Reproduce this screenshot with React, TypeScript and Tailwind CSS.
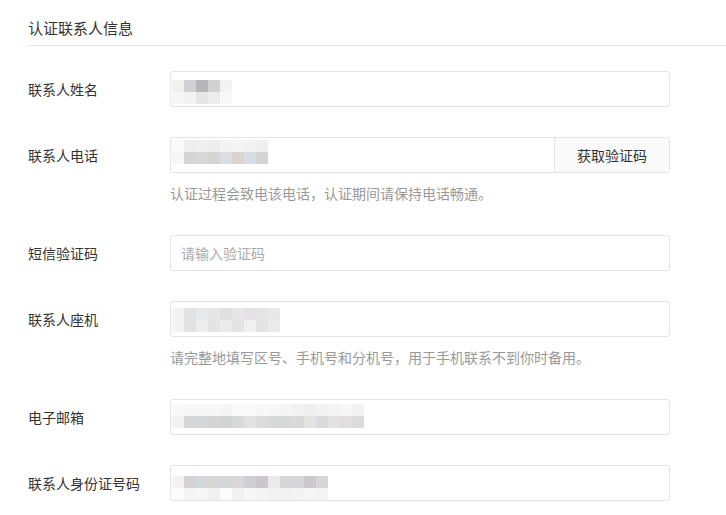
import React from "react";

// blurred values are drawn as mosaic blocks (12px cells)
type Mosaic = { top: number; rows: string[][] };

const nameMosaic: Mosaic = {
  top: 9,
  rows: [
    ["bg-[#f1f0ef]", "bg-[#cfd0d2]", "bg-[#b9b3ba]", "bg-[#d0d1d0]", "bg-[#f2f3f5]"],
    ["bg-[#f6f6f6]", "bg-[#f3f3f3]", "bg-[#e6e6e6]", "bg-[#ececec]", "bg-[#f8f8f8]"],
  ],
};

const phoneMosaic: Mosaic = {
  top: 3,
  rows: [
    ["bg-[#fafafa]", "bg-[#eeeeee]", "bg-[#efefef]", "bg-[#ededed]", "bg-[#f3f3f3]", "bg-[#f4f4f4]", "bg-[#f2f2f2]", "bg-[#efefef]"],
    ["bg-[#f6f6f6]", "bg-[#d5d5d5]", "bg-[#d8d8d8]", "bg-[#d4d4d4]", "bg-[#dcdde0]", "bg-[#d9d4cf]", "bg-[#d9dce0]", "bg-[#d4d4d4]"],
  ],
};

const landlineMosaic: Mosaic = {
  top: 7,
  rows: [
    ["bg-[#f3f3f3]", "bg-[#e2e2e2]", "bg-[#e8e9eb]", "bg-[#e6e6e6]", "bg-[#e1e0e0]", "bg-[#e6e6e6]", "bg-[#e4e2e4]", "bg-[#e5e5e5]", "bg-[#e8e8e8]"],
    ["bg-[#f3f3f3]", "bg-[#e2e2e2]", "bg-[#ececec]", "bg-[#e4e4e4]", "bg-[#ebebeb]", "bg-[#e4e4e4]", "bg-[#f0f0f0]", "bg-[#e3e3e3]", "bg-[#eaeaea]"],
  ],
};

const emailMosaic: Mosaic = {
  top: 5,
  rows: [
    ["bg-[#f8f8f8]", "bg-[#f7f7f7]", "bg-[#f7f7f7]", "bg-[#f7f7f7]", "bg-[#f5f5f5]", "bg-[#fafafa]", "bg-[#fafafa]", "bg-[#f7f7f7]", "bg-[#f6f6f6]", "bg-[#f5f5f5]", "bg-[#f2f2f2]", "bg-[#efefef]", "bg-[#f2f2f2]", "bg-[#f4f4f4]", "bg-[#f6f6f6]", "bg-[#f3f3f3]"],
    ["bg-[#f2f2f2]", "bg-[#d7d7d7]", "bg-[#d6d7d9]", "bg-[#d4d4d4]", "bg-[#d2d4d4]", "bg-[#d8d9db]", "bg-[#e1e1e1]", "bg-[#dcdcdc]", "bg-[#d7d8d8]", "bg-[#d7d8d8]", "bg-[#d9dad6]", "bg-[#e5e3e2]", "bg-[#d8dadc]", "bg-[#e1e1e1]", "bg-[#e1dfdc]", "bg-[#d9dcdf]"],
  ],
};

const idMosaic: Mosaic = {
  top: 11,
  rows: [
    ["bg-[#f3f3f3]", "bg-[#d5d2d1]", "bg-[#d5d8db]", "bg-[#d8d6d4]", "bg-[#d5d6d8]", "bg-[#d9d7d7]", "bg-[#cfcfd3]", "bg-[#cbc6cb]", "bg-[#e9eaea]", "bg-[#d6d6d6]", "bg-[#d6d6d8]", "bg-[#cbc9cc]", "bg-[#d6d6d6]"],
    ["bg-[#fbfbfb]", "bg-[#f5f5f5]", "bg-[#f6f6f6]", "bg-[#f0f0f0]", "bg-[#fbfbfb]", "bg-[#f0f1f1]", "bg-[#f7f7f7]", "bg-[#f4f4f4]", "bg-[#f2f2f2]", "bg-[#f2f2f2]", "bg-[#f3f3f3]", "bg-[#f6f6f6]", "bg-[#f4f4f4]"],
  ],
};

const topPad: Record<number, string> = {
  3: "pt-[2px]",
  5: "pt-[4px]",
  7: "pt-[6px]",
  9: "pt-[8px]",
  11: "pt-[10px]",
};

function MosaicValue({ m }: { m: Mosaic }) {
  return (
    <div className={`flex flex-col pl-[1px] ${topPad[m.top]}`}>
      {m.rows.map((row, i) => (
        <div key={i} className="flex">
          {row.map((c, j) => (
            <div key={j} className={`h-[12px] w-[12px] ${c}`} />
          ))}
        </div>
      ))}
    </div>
  );
}

function Field({
  label,
  children,
  help,
}: {
  label: string;
  children: React.ReactNode;
  help?: string;
}) {
  return (
    <div className={help ? "mb-[32px]" : "mb-[30px]"}>
      <div className="flex h-[36px] items-center">
        <div className="w-[142px] shrink-0 text-[14px] leading-5 text-[#333]">{label}</div>
        {children}
      </div>
      {help && (
        <div className="ml-[142px] mt-[10px] h-5 text-[14px] leading-5 text-[#999]">{help}</div>
      )}
    </div>
  );
}

function Box({ children }: { children?: React.ReactNode }) {
  return (
    <div className="h-[36px] w-[500px] overflow-hidden rounded-[3px] border border-[#e3e3e3] bg-white">
      {children}
    </div>
  );
}

export default function App() {
  return (
    <div
      className="min-h-[515px] bg-white pl-[28px]"
      style={{ fontFamily: '"Noto Sans CJK SC", "Noto Sans", sans-serif' }}
    >
      <div className="h-[46px] border-b border-[#e8e8e8] pt-[18px] text-[15px] leading-5 text-[#333]">
        认证联系人信息
      </div>

      <div className="mt-[25px]">
        <Field label="联系人姓名">
          <Box>
            <MosaicValue m={nameMosaic} />
          </Box>
        </Field>

        <Field label="联系人电话" help="认证过程会致电该电话，认证期间请保持电话畅通。">
          <div className="flex h-[36px] w-[500px] overflow-hidden rounded-[3px] border border-[#e3e3e3]">
            <div className="flex-1 bg-white">
              <MosaicValue m={phoneMosaic} />
            </div>
            <button className="w-[115px] border-l border-[#e3e3e3] bg-[#fafafa] text-[14px] text-[#333]">
              获取验证码
            </button>
          </div>
        </Field>

        <Field label="短信验证码">
          <Box>
            <input
              placeholder="请输入验证码"
              className="h-full w-full px-[10px] text-[14px] text-[#333] outline-none placeholder:text-[#aaa]"
            />
          </Box>
        </Field>

        <Field label="联系人座机" help="请完整地填写区号、手机号和分机号，用于手机联系不到你时备用。">
          <Box>
            <MosaicValue m={landlineMosaic} />
          </Box>
        </Field>

        <Field label="电子邮箱">
          <Box>
            <MosaicValue m={emailMosaic} />
          </Box>
        </Field>

        <Field label="联系人身份证号码">
          <Box>
            <MosaicValue m={idMosaic} />
          </Box>
        </Field>
      </div>
    </div>
  );
}
